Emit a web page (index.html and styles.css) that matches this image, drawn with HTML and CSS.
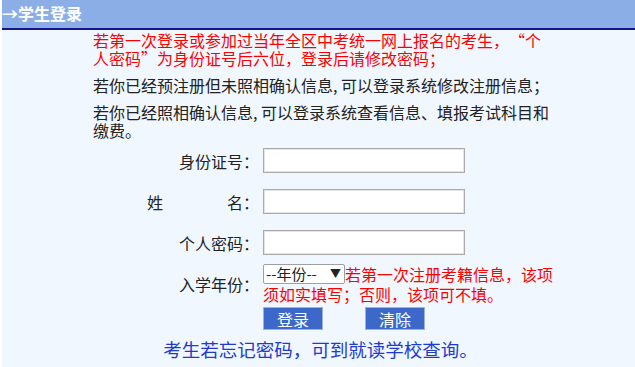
FILE: index.html
```html
<!DOCTYPE html>
<html lang="zh-CN">
<head>
    <meta charset="UTF-8">
    <meta name="viewport" content="width=device-width, initial-scale=1.0">
    <title>学生登录</title>
    <link rel="stylesheet" href="styles.css">
</head>
<body>
    <div class="page">
        <div class="title-bar">→学生登录</div>

        <!-- 提示信息 -->
        <div class="notice">
            <p class="red">若第一次登录或参加过当年全区中考统一网上报名的考生，<span class="q-open">“</span>个人密码<span class="q-close">”</span>为身份证号后六位，登录后请修改密码；</p>
            <p>若你已经预注册但未照相确认信息, 可以登录系统修改注册信息；</p>
            <p>若你已经照相确认信息, 可以登录系统查看信息、填报考试科目和缴费。</p>
        </div>

        <!-- 登录表单 -->
        <form class="login-form" onsubmit="return false">
            <div class="row">
                <label class="label" for="sfzh">身份证号：</label>
                <div class="field"><input type="text" id="sfzh"></div>
            </div>
            <div class="row">
                <label class="label name-label" for="xm"><span>姓</span><span>名：</span></label>
                <div class="field"><input type="text" id="xm"></div>
            </div>
            <div class="row">
                <label class="label" for="mm">个人密码：</label>
                <div class="field"><input type="password" id="mm"></div>
            </div>
            <div class="row row-year">
                <label class="label" for="rxnf">入学年份：</label>
                <div class="field field-year"><span class="select-wrap"><select id="rxnf">
                        <option value="">--年份--</option>
                        <option>2024</option>
                        <option>2025</option>
                    </select><span class="arrow">▼</span></span><span class="red">若第一次注册考籍信息，该项须如实填写；否则，该项可不填。</span></div>
            </div>
            <div class="row row-buttons">
                <div class="label"></div>
                <div class="field buttons">
                    <button type="submit">登录</button>
                    <button type="reset">清除</button>
                </div>
            </div>
        </form>

        <p class="forget">考生若忘记密码，可到就读学校查询。</p>
    </div>
</body>
</html>
```

FILE: styles.css
```css
body {
    margin: 0;
    background: #ffffff;
    font-family: "Noto Sans CJK SC", "Noto Sans", sans-serif;
    font-size: 16px;
    color: #222;
}
.page {
    margin-left: 2px;
    min-height: 100vh;
    background: #f0f7ff;
    overflow: hidden;
}
.title-bar {
    height: 28px;
    line-height: 27px;
    background: #8caee6;
    border-bottom: 2px solid #14148c;
    color: #ffffff;
    font-weight: bold;
    font-size: 16px;
}
.notice {
    width: 460px;
    margin: 1px 0 0 91px;
}
.notice p {
    margin: 0 0 9px;
    line-height: 18px;
}
.red {
    color: #ff0000;
}
/* 引号按全角宽度占位 */
.q-open,
.q-close {
    display: inline-block;
    width: 1em;
}
.q-open {
    text-align: right;
}
.q-close {
    text-align: left;
}
.login-form {
    margin: 8px 0 0 0;
}
.row {
    display: flex;
    align-items: center;
    margin-bottom: 16px;
}
.label {
    width: 261px;
    padding-right: 4px;
    box-sizing: border-box;
    text-align: right;
    flex-shrink: 0;
}
.name-label {
    display: flex;
    justify-content: space-between;
    padding-left: 145px;
}
.field {
    width: 296px;
}
input {
    display: block;
    width: 202px;
    height: 25px;
    box-sizing: border-box;
    border: 1px solid #aaaaaa;
    box-shadow: inset 0 0 0 1px #e4e4e4;
    background: #ffffff;
    margin: 0;
}
.row-year {
    margin-bottom: 3px;
    margin-top: -7px;
}
.field-year {
    line-height: 20px;
}
.select-wrap {
    position: relative;
    display: inline-block;
    vertical-align: top;
}
select {
    appearance: none;
    -webkit-appearance: none;
    width: 82px;
    height: 20px;
    padding: 0 0 0 2px;
    border: 1px solid #a0a0a0;
    border-radius: 2px;
    background: #ffffff;
    font-family: "Noto Sans CJK SC", sans-serif;
    font-size: 15px;
    line-height: 18px;
    color: #222;
    vertical-align: top;
}
.arrow {
    position: absolute;
    right: 4px;
    top: 0;
    font-size: 11px;
    line-height: 19px;
    pointer-events: none;
}
.row-buttons {
    margin-bottom: 0;
}
.buttons {
    display: flex;
    gap: 42px;
}
button {
    width: 60px;
    height: 23px;
    padding: 0;
    background: #3b68c9;
    border: 1px solid #9fb2d8;
    color: #ffffff;
    font-family: "Noto Sans CJK SC", sans-serif;
    font-size: 16px;
    line-height: 20px;
    cursor: pointer;
}
.forget {
    margin: 8px 0 0;
    text-align: center;
    color: #1f3ad0;
    font-size: 18.5px;
    line-height: 22px;
    padding-left: 4px;
}
```
